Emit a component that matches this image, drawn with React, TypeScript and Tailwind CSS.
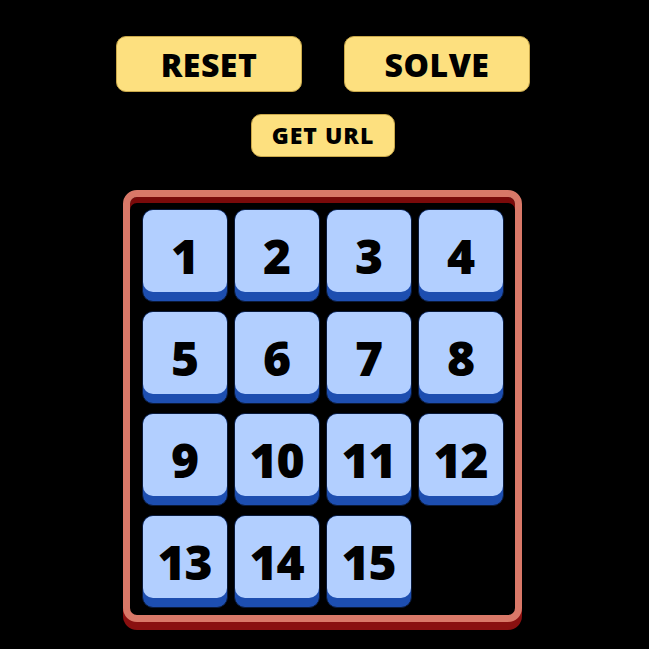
const tiles: (number | null)[] = [1, 2, 3, 4, 5, 6, 7, 8, 9, 10, 11, 12, 13, 14, 15, null]

function Tile({ value }: { value: number | null }) {
  if (value === null) return <div className="w-[86px] h-[93px]" />
  return (
    <div className="w-[86px] h-[93px] rounded-[11px] bg-[#1d4eb0] border border-[#0a1a3a]">
      <div className="h-[82px] rounded-[10px] bg-[#b2cfff] flex items-center justify-center pt-[10px] text-[48px] font-extrabold text-black leading-none tracking-[-1px]">
        {value}
      </div>
    </div>
  )
}

export default function App() {
  return (
    <div
      className="w-[649px] h-[649px] bg-black flex flex-col items-center pt-[36px]"
      style={{ fontFamily: '"Open Sans", "Liberation Sans", sans-serif' }}
    >
      <div className="flex gap-[42px] mr-[3px]">
        <button className="w-[186px] h-[56px] rounded-[10px] bg-[#fde07f] border border-[#c9a84a] text-[32px] font-extrabold text-black leading-none pt-[2px] tracking-[0.5px]">
          RESET
        </button>
        <button className="w-[186px] h-[56px] rounded-[10px] bg-[#fde07f] border border-[#c9a84a] text-[32px] font-extrabold text-black leading-none pt-[2px] tracking-[0.5px]">
          SOLVE
        </button>
      </div>

      <button className="mt-[22px] mr-[3px] w-[144px] h-[43px] rounded-[10px] bg-[#fde07f] border border-[#c9a84a] text-[23px] font-extrabold text-black leading-none tracking-[1px]">
        GET URL
      </button>

      <div className="mt-[33px] mr-[5px] w-[399px] h-[432px] rounded-[14px] border-[7px] border-[#d97868] bg-black pt-[12px] pl-[12px] pr-[9px] pb-[6px] shadow-[inset_0_6px_0_#7a0a0a,0_8px_0_#8a1010]">
        <div className="grid grid-cols-[repeat(4,86px)] gap-x-[6px] gap-y-[9px]">
          {tiles.map((t, i) => (
            <Tile key={i} value={t} />
          ))}
        </div>
      </div>
    </div>
  )
}
